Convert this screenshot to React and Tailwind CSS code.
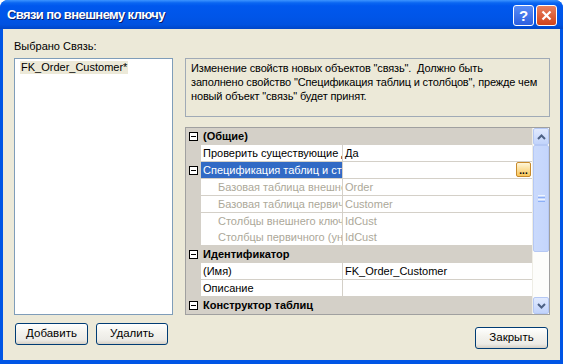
import React from "react";

const rows = [
  { type: "cat", label: "(Общие)" },
  { type: "row", name: "Проверить существующие данные при создании", value: "Да" },
  { type: "row", name: "Спецификация таблиц и столбцов", value: "", selected: true, expand: true, button: true },
  { type: "sub", name: "Базовая таблица внешнего ключа", value: "Order" },
  { type: "sub", name: "Базовая таблица первичного/уникального ключа", value: "Customer" },
  { type: "sub", name: "Столбцы внешнего ключа", value: "IdCust" },
  { type: "sub", name: "Столбцы первичного (уникального) ключа", value: "IdCust" },
  { type: "cat", label: "Идентификатор" },
  { type: "row", name: "(Имя)", value: "FK_Order_Customer" },
  { type: "row", name: "Описание", value: "" },
  { type: "cat", label: "Конструктор таблиц" },
];

function Minus() {
  return (
    <div className="w-[9px] h-[9px] border border-[#000000] bg-white flex items-center justify-center">
      <div className="w-[5px] h-[1px] bg-black" />
    </div>
  );
}

function XPButton({ children, className = "" }) {
  return (
    <button
      className={
        "h-[22px] border border-[#003C74] rounded-[3px] bg-[linear-gradient(to_bottom,#ffffff_0%,#f4f3ee_40%,#ecebe6_80%,#d6d0c5_100%)] text-[11.5px] text-black flex items-center justify-center " +
        className
      }
    >
      {children}
    </button>
  );
}

function Row({ r }) {
  if (r.type === "cat") {
    return (
      <div className="h-[17px] flex items-center bg-[#D4D0C8] border-b border-[#D4D0C8]">
        <div className="w-[15px] flex items-center justify-center">
          <Minus />
        </div>
        <div className="pl-[2px] font-bold text-[11px] text-black">{r.label}</div>
      </div>
    );
  }
  const sub = r.type === "sub";
  return (
    <div className="h-[17px] flex bg-[#D4D0C8]">
      <div className="w-[15px] flex items-center justify-center">{r.expand ? <Minus /> : null}</div>
      <div
        className={
          "w-[141px] h-[16px] overflow-hidden whitespace-nowrap text-[11px] leading-[16px] " +
          (sub ? "pl-[17px] text-[#ACA899] bg-white " : "pl-[2px] ") +
          (r.selected ? "bg-[#316AC5] text-white" : sub ? "" : "bg-white text-black")
        }
      >
        {r.name}
      </div>
      <div className="w-[1px] h-[16px] bg-[#D4D0C8]" />
      <div
        className={
          "flex-1 h-[16px] bg-white text-[11px] leading-[16px] pl-[2px] flex items-center " +
          (sub ? "text-[#ACA899]" : "text-black")
        }
      >
        <span className="flex-1">{r.value}</span>
        {r.button ? (
          <div className="w-[15px] h-[15px] mr-[1px] rounded-[2px] border border-[#C88A2B] bg-[linear-gradient(to_bottom,#fff6d8,#f8c65a)] flex items-end justify-center text-[10px] leading-[10px] text-black font-bold">
            ...
          </div>
        ) : null}
      </div>
    </div>
  );
}

function Chevron({ up }) {
  return (
    <svg width="9" height="6" viewBox="0 0 9 6">
      <path
        d={up ? "M1 5 L4.5 1.5 L8 5" : "M1 1 L4.5 4.5 L8 1"}
        fill="none"
        stroke="#4D6185"
        strokeWidth="2"
      />
    </svg>
  );
}

function Scrollbar() {
  return (
    <div className="w-[17px] flex flex-col bg-[#FDFDFB] border-l border-[#EEEDE5]">
      <div className="h-[17px] rounded-[2px] border border-[#B5C8F4] bg-[linear-gradient(to_bottom,#E1EAFE,#C1D3FB)] flex items-center justify-center">
        <Chevron up />
      </div>
      <div className="h-[107px] rounded-[2px] border border-[#B5C8F4] bg-[linear-gradient(to_right,#CADAFC,#C4D5FC)] flex flex-col items-center justify-center gap-[1px]">
        <div className="w-[7px] h-[1px] bg-[#EEF4FE]" />
        <div className="w-[7px] h-[1px] bg-[#8CB0F8]" />
        <div className="w-[7px] h-[1px] bg-[#EEF4FE]" />
        <div className="w-[7px] h-[1px] bg-[#8CB0F8]" />
      </div>
      <div className="flex-1" />
      <div className="h-[17px] rounded-[2px] border border-[#B5C8F4] bg-[linear-gradient(to_bottom,#E1EAFE,#C1D3FB)] flex items-center justify-center">
        <Chevron />
      </div>
    </div>
  );
}

export default function App() {
  return (
    <div
      className="w-[563px] h-[364px] flex flex-col bg-[#0055E5] rounded-t-[8px] overflow-hidden"
      style={{ fontFamily: '"Liberation Sans", Arial, sans-serif' }}
    >
      <div className="h-[29px] flex items-center pl-[7px] pr-[6px] bg-[linear-gradient(to_bottom,#3D95FF_0%,#0A66F2_10%,#0058EE_20%,#0055E8_60%,#0052E0_85%,#0046C8_100%)]">
        <div className="flex-1 text-white font-bold text-[13px] tracking-[-0.6px] [text-shadow:1px_1px_0_#0A1F6B]">
          Связи по внешнему ключу
        </div>
        <div className="flex gap-[2px] mt-[1px]">
          <div className="w-[21px] h-[21px] rounded-[3px] border border-white bg-[linear-gradient(to_bottom,#5A8CF5,#2B5FE0)] flex items-center justify-center text-white font-bold text-[15px] leading-none">
            ?
          </div>
          <div className="w-[21px] h-[21px] rounded-[3px] border border-white bg-[linear-gradient(to_bottom,#E8805F,#D1431A)] flex items-center justify-center">
            <svg width="11" height="11" viewBox="0 0 11 11">
              <path d="M1.5 1.5 L9.5 9.5 M9.5 1.5 L1.5 9.5" stroke="white" strokeWidth="2.2" />
            </svg>
          </div>
        </div>
      </div>
      <div className="flex-1 mx-[3px] mb-[4px] bg-[#ECE9D8] flex pl-[11px] gap-[12px]">
        <div className="w-[159px] flex flex-col pt-[11px]">
          <div className="text-[11px] leading-[13px] text-black mb-[5px]">Выбрано Связь:</div>
          <div className="h-[257px] border border-[#7F9DB9] bg-white pt-[2px] pl-[5px] text-[11px] leading-[13px]">
            <div className="w-fit bg-[#ECE9D8] text-[11px] leading-[13px] text-black px-[1px]">
              FK_Order_Customer*
            </div>
          </div>
          <div className="flex gap-[8px] mt-[8px] pl-[1px]">
            <XPButton className="w-[73px]">Добавить</XPButton>
            <XPButton className="w-[72px]">Удалить</XPButton>
          </div>
        </div>
        <div className="w-[365px] flex flex-col pt-[29px]">
          <div className="h-[59px] border border-[#A0AAB6] px-[5px] pt-[2px] text-[11px] leading-[14px] text-black whitespace-nowrap tracking-[-0.15px]">
            Изменение свойств новых объектов "связь".&nbsp; Должно быть
            <br />
            заполнено свойство "Спецификация таблиц и столбцов", прежде чем
            <br />
            новый объект "связь" будет принят.
          </div>
          <div className="mt-[10px] h-[188px] border border-[#A0A0A0] flex bg-[#D4D0C8]">
            <div className="flex-1 flex flex-col overflow-hidden">
              {rows.map((r, i) => (
                <Row key={i} r={r} />
              ))}
            </div>
            <Scrollbar />
          </div>
          <div className="flex justify-end mt-[12px] pr-[2px]">
            <XPButton className="w-[73px]">Закрыть</XPButton>
          </div>
        </div>
      </div>
    </div>
  );
}
